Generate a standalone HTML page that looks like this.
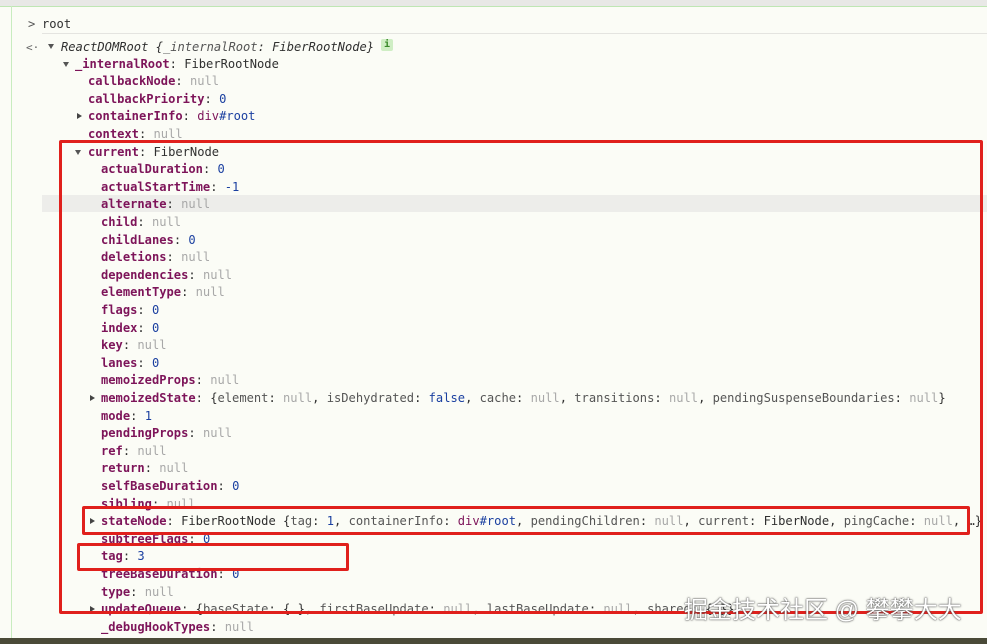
<!DOCTYPE html>
<html><head><meta charset="utf-8"><style>
html,body{margin:0;padding:0;width:987px;height:644px;overflow:hidden}
body{background:#fbfcf6;position:relative;font-family:"DejaVu Sans Mono","Liberation Mono",monospace;font-size:12.1px;color:#303030}
.l{position:absolute;white-space:pre;height:17px;line-height:17px;margin-top:1.5px}
.k{color:#7d1459;font-weight:bold}
.pk{color:#555}
.n{color:#a8a8a8}
.b{color:#1a3fa0}
.t{position:absolute;width:0;height:0;border-left:3.5px solid transparent;border-right:3.5px solid transparent;border-top:5px solid #555}
.tr{position:absolute;width:0;height:0;border-top:3.5px solid transparent;border-bottom:3.5px solid transparent;border-left:5px solid #444}
.box{position:absolute;border:3px solid #e0201c;border-radius:2px;box-sizing:border-box}
</style></head><body>
<div style="position:absolute;left:0;top:0;width:987px;height:6px;background:#e8e8e6"></div>
<div style="position:absolute;left:0;top:6px;width:987px;height:1px;background:#bfe6b4"></div>
<div style="position:absolute;left:11px;top:6px;width:1px;height:632px;background:#c8ecbf"></div>
<div style="position:absolute;left:42px;top:33px;width:945px;height:1px;background:#e4e4e0"></div>
<div style="position:absolute;left:42px;top:195px;width:945px;height:17px;background:#ededea"></div>
<div style="position:absolute;left:0;top:638px;width:987px;height:6px;background:#4a4a38"></div>
<div class="l" style="left:28px;top:14px;color:#555">&gt;</div>
<div class="l" style="left:42px;top:14px">root</div>
<div class="l" style="left:26px;top:37px;color:#666;font-size:11px">&lt;·</div>
<div class="t" style="left:48px;top:44px"></div>
<div class="l" style="left:61px;top:37px;font-style:italic">ReactDOMRoot {<span class="pk">_internalRoot</span>: FiberRootNode}</div>
<div style="position:absolute;left:381px;top:39px;width:12px;height:12px;background:#cfeec4;color:#3a8a2a;font-size:10px;line-height:12px;text-align:center;font-weight:bold;border-radius:2px">i</div>
<div class="t" style="left:63px;top:62px"></div>
<div class="l" style="left:75px;top:54px"><span class="k">_internalRoot</span>: FiberRootNode</div>

<div class="l" style="left:88px;top:71.6px"><span class="k">callbackNode</span>: <span class="n">null</span></div>
<div class="l" style="left:88px;top:89.2px"><span class="k">callbackPriority</span>: <span class="b">0</span></div>
<div class="tr" style="left:77px;top:113px"></div>
<div class="l" style="left:88px;top:106.8px"><span class="k">containerInfo</span>: <span style="color:#7d1459">div</span><span class="b">#root</span></div>
<div class="l" style="left:88px;top:124.4px"><span class="k">context</span>: <span class="n">null</span></div>
<div class="t" style="left:75px;top:150px"></div>
<div class="l" style="left:88px;top:142px"><span class="k">current</span>: FiberNode</div>
<div class="l" style="left:101px;top:159.6px"><span class="k">actualDuration</span>: <span class="b">0</span></div>
<div class="l" style="left:101px;top:177.2px"><span class="k">actualStartTime</span>: <span class="b">-1</span></div>
<div class="l" style="left:101px;top:194.8px"><span class="k">alternate</span>: <span class="n">null</span></div>
<div class="l" style="left:101px;top:212.4px"><span class="k">child</span>: <span class="n">null</span></div>
<div class="l" style="left:101px;top:230px"><span class="k">childLanes</span>: <span class="b">0</span></div>
<div class="l" style="left:101px;top:247.6px"><span class="k">deletions</span>: <span class="n">null</span></div>
<div class="l" style="left:101px;top:265.2px"><span class="k">dependencies</span>: <span class="n">null</span></div>
<div class="l" style="left:101px;top:282.8px"><span class="k">elementType</span>: <span class="n">null</span></div>
<div class="l" style="left:101px;top:300.4px"><span class="k">flags</span>: <span class="b">0</span></div>
<div class="l" style="left:101px;top:318px"><span class="k">index</span>: <span class="b">0</span></div>
<div class="l" style="left:101px;top:335.6px"><span class="k">key</span>: <span class="n">null</span></div>
<div class="l" style="left:101px;top:353.2px"><span class="k">lanes</span>: <span class="b">0</span></div>
<div class="l" style="left:101px;top:370.8px"><span class="k">memoizedProps</span>: <span class="n">null</span></div>
<div class="tr" style="left:90px;top:395px"></div>
<div class="l" style="left:101px;top:388.4px"><span class="k">memoizedState</span>: {<span class="pk">element</span>: <span class="n">null</span>, <span class="pk">isDehydrated</span>: <span class="b">false</span>, <span class="pk">cache</span>: <span class="n">null</span>, <span class="pk">transitions</span>: <span class="n">null</span>, <span class="pk">pendingSuspenseBoundaries</span>: <span class="n">null</span>}</div>
<div class="l" style="left:101px;top:406px"><span class="k">mode</span>: <span class="b">1</span></div>
<div class="l" style="left:101px;top:423.6px"><span class="k">pendingProps</span>: <span class="n">null</span></div>
<div class="l" style="left:101px;top:441.2px"><span class="k">ref</span>: <span class="n">null</span></div>
<div class="l" style="left:101px;top:458.8px"><span class="k">return</span>: <span class="n">null</span></div>
<div class="l" style="left:101px;top:476.4px"><span class="k">selfBaseDuration</span>: <span class="b">0</span></div>
<div class="l" style="left:101px;top:494px"><span class="k">sibling</span>: <span class="n">null</span></div>
<div class="tr" style="left:90px;top:518px"></div>
<div class="l" style="left:101px;top:511.6px"><span class="k">stateNode</span>: FiberRootNode {<span class="pk">tag</span>: <span class="b">1</span>, <span class="pk">containerInfo</span>: <span style="color:#7d1459">div</span><span class="b">#root</span>, <span class="pk">pendingChildren</span>: <span class="n">null</span>, <span class="pk">current</span>: FiberNode, <span class="pk">pingCache</span>: <span class="n">null</span>, …}</div>
<div class="l" style="left:101px;top:529.2px"><span class="k">subtreeFlags</span>: <span class="b">0</span></div>
<div class="l" style="left:101px;top:546.8px"><span class="k">tag</span>: <span class="b">3</span></div>
<div class="l" style="left:101px;top:564.4px"><span class="k">treeBaseDuration</span>: <span class="b">0</span></div>
<div class="l" style="left:101px;top:582px"><span class="k">type</span>: <span class="n">null</span></div>
<div class="tr" style="left:90px;top:606px"></div>
<div class="l" style="left:101px;top:599.6px"><span class="k">updateQueue</span>: {<span class="pk">baseState</span>: {…}, <span class="pk">firstBaseUpdate</span>: <span class="n">null</span>, <span class="pk">lastBaseUpdate</span>: <span class="n">null</span>, <span class="pk">shared</span>: {…}}</div>
<div class="l" style="left:101px;top:617.2px"><span class="k">_debugHookTypes</span>: <span class="n">null</span></div>

<div class="box" style="left:59px;top:140px;width:924px;height:474px"></div>
<div class="box" style="left:82px;top:506px;width:888px;height:29px"></div>
<div class="box" style="left:77px;top:543px;width:272px;height:28px"></div>
<div class="l" style="left:684px;top:594px;height:30px;line-height:30px;font-family:'Liberation Sans','Noto Sans CJK SC',sans-serif;font-size:24px;color:#fff;text-shadow:0 0 2px #555,0 0 1px #333">掘金技术社区 @ 攀攀大大</div>
</body></html>
